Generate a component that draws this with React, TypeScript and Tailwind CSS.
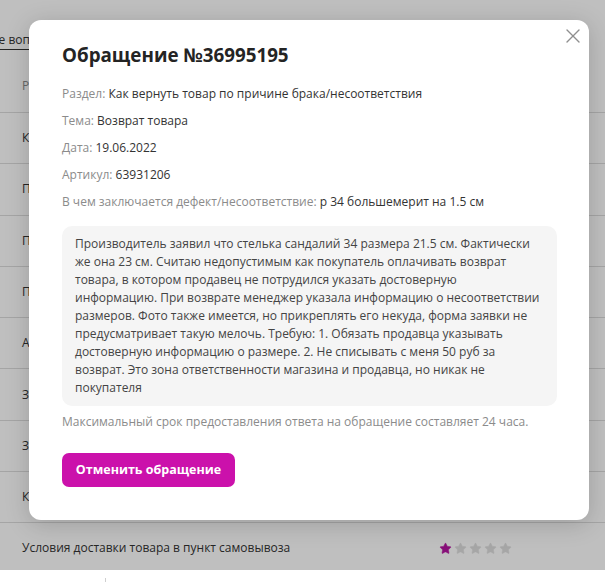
import { Star, X } from "lucide-react";

const rows = [
  "Как оформить возврат товара",
  "Почему не пришёл заказ",
  "Правила возврата денежных средств",
  "Порядок получения заказа",
  "Акции и скидки на товары",
  "Задержка доставки заказа",
  "Заказ доставлен не полностью",
  "Как выбрать пункт выдачи",
];

const message = [
  "Производитель заявил что стелька сандалий 34 размера 21.5 см. Фактически",
  "же она 23 см. Считаю недопустимым как покупатель оплачивать возврат",
  "товара, в котором продавец не потрудился указать достоверную",
  "информацию. При возврате менеджер указала информацию о несоответствии",
  "размеров. Фото также имеется, но прикреплять его некуда, форма заявки не",
  "предусматривает такую мелочь. Требую: 1. Обязать продавца указывать",
  "достоверную информацию о размере. 2. Не списывать с меня 50 руб за",
  "возврат. Это зона ответственности магазина и продавца, но никак не",
  "покупателя",
];

const Stars = ({ value }: { value: number }) => (
  <div className="flex items-center gap-[2px]">
    {[1, 2, 3, 4, 5].map((i) => (
      <Star
        key={i}
        className={i <= value ? "w-[13px] h-[13px] fill-[#b515a0] text-[#b515a0]" : "w-[13px] h-[13px] fill-[#dedede] text-[#dedede]"}
        strokeWidth={1}
      />
    ))}
  </div>
);

const Field = ({ label, value }: { label: string; value: string }) => (
  <p className="h-[20px] leading-[20px]">
    <span className="text-[#8b8b8b]">{label}: </span>
    <span className="text-[#333]">{value}</span>
  </p>
);

export default function App() {
  return (
    <div className="relative w-[605px] h-[582px] overflow-hidden bg-white font-['Open_Sans',sans-serif] text-[12px]">
      {/* page behind the modal */}
      <div className="h-[60px] pt-[31px] whitespace-nowrap">
        <a className="-ml-[37px] text-[#333] border-b border-[#333] pb-[1px]">Частые вопросы</a>
      </div>
      <div className="h-[52px] flex items-center pl-[22px] text-[#8b8b8b]">Раздел</div>
      {rows.map((r) => (
        <div key={r} className="h-[51.3px] flex items-center justify-between pl-[22px] pr-[93px] border-t border-[#dcdcdc] text-[#333]">
          <span>{r}</span>
          <Stars value={3} />
        </div>
      ))}
      <div className="h-[48px] pt-[3px] flex items-center justify-between pl-[22px] pr-[93px] border-t border-[#dcdcdc] text-[#333]">
        <span>Условия доставки товара в пункт самовывоза</span>
        <Stars value={1} />
      </div>
      <div className="ml-[105px] mt-[8px] w-px h-[10px] bg-[#cfcfcf]" />

      {/* overlay */}
      <div className="absolute left-0 top-0 w-full h-[570px] bg-black/25" />

      {/* modal */}
      <div className="absolute left-[29px] top-[20px] w-[560px] h-[500px] bg-white rounded-[12px] shadow-[0_4px_24px_rgba(0,0,0,0.18)] pt-[22px] pl-[33px] pr-[32px]">
        <button className="absolute right-[4px] top-[4px] text-[#8f8f8f]">
          <X className="w-[24px] h-[24px]" strokeWidth={1.4} />
        </button>
        <h2 className="text-[18.8px] leading-[26px] font-bold text-[#242424]">Обращение №36995195</h2>
        <div className="mt-[16px] flex flex-col gap-[7px]">
          <Field label="Раздел" value="Как вернуть товар по причине брака/несоответствия" />
          <Field label="Тема" value="Возврат товара" />
          <Field label="Дата" value="19.06.2022" />
          <Field label="Артикул" value="63931206" />
          <Field label="В чем заключается дефект/несоответствие" value="р 34 большемерит на 1.5 см" />
        </div>
        <div className="mt-[14px] h-[180px] rounded-[10px] bg-[#f5f5f5] px-[13px] py-[9px] leading-[18px] text-[#444]">
          {message.map((line, i) => (
            <span key={i} className="block whitespace-nowrap">{line}</span>
          ))}
        </div>
        <p className="mt-[6px] h-[20px] leading-[20px] text-[#8b8b8b]">
          Максимальный срок предоставления ответа на обращение составляет 24 часа.
        </p>
        <button className="mt-[21px] w-[173px] h-[34px] rounded-[7px] bg-[#cb11ab] text-white font-bold text-[12.5px]">
          Отменить обращение
        </button>
      </div>
    </div>
  );
}
